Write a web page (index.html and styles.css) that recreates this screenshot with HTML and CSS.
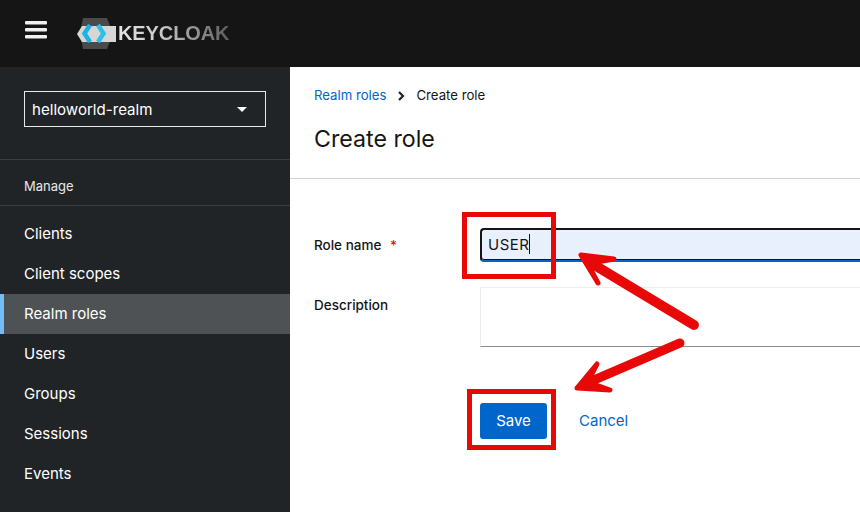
FILE: index.html
```html
<!DOCTYPE html>
<html lang="en">
<head>
    <meta charset="UTF-8">
    <meta name="viewport" content="width=device-width, initial-scale=1.0">
    <title>Create role</title>
    <link rel="stylesheet" href="styles.css">
</head>
<body>

    <!-- Top bar -->
    <header class="topbar">
        <svg class="burger" width="22" height="20" viewBox="0 0 22 20">
            <rect x="0" y="1" width="22" height="3.5" rx="1" fill="#f0f0f0"/>
            <rect x="0" y="8" width="22" height="3.5" rx="1" fill="#f0f0f0"/>
            <rect x="0" y="15" width="22" height="3.5" rx="1" fill="#f0f0f0"/>
        </svg>
        <div class="logo">
            <svg width="41" height="33" viewBox="0 0 41 33">
                <polygon points="6,1 30,1 36,16.5 30,32 6,32 3,16.5" fill="#4a4a4a"/>
                <polygon points="0,17 5,9 39,9 39,25 5,25" fill="#d6d6d6"/>
                <path d="M13 8 L7.5 16.5 L13 25" fill="none" stroke="#1ab4e4" stroke-width="4.5"/>
                <path d="M21 8 L26.5 16.5 L21 25" fill="none" stroke="#2cc0ea" stroke-width="4.5"/>
            </svg>
            <span class="logo-text">KEYCLOAK</span>
        </div>
    </header>

    <div class="layout">
        <!-- Sidebar -->
        <nav class="sidebar">
            <div class="realm-wrap">
                <div class="realm-select">
                    <span>helloworld-realm</span>
                    <span class="caret"></span>
                </div>
            </div>
            <div class="nav-title">Manage</div>
            <ul class="nav-list">
                <li>Clients</li>
                <li>Client scopes</li>
                <li class="current">Realm roles</li>
                <li>Users</li>
                <li>Groups</li>
                <li>Sessions</li>
                <li>Events</li>
            </ul>
        </nav>

        <!-- Main -->
        <main class="content">
            <section class="page-head">
                <div class="crumbs">
                    <a href="#">Realm roles</a>
                    <svg width="8" height="10" viewBox="0 0 8 10">
                        <path d="M2 1 L6 5 L2 9" fill="none" stroke="#222" stroke-width="2.2"/>
                    </svg>
                    <span>Create role</span>
                </div>
                <h1>Create role</h1>
            </section>

            <form class="role-form">
                <div class="form-row name-row">
                    <label>Role name <span class="req">*</span></label>
                    <div class="name-input">USER<span class="cursor"></span></div>
                </div>
                <div class="form-row desc-row">
                    <label>Description</label>
                    <div class="desc-input"></div>
                </div>
                <div class="actions">
                    <button type="button">Save</button>
                    <a href="#">Cancel</a>
                </div>
            </form>
        </main>
    </div>

    <!-- Red annotations over the screenshot -->
    <svg class="marks" width="860" height="512" viewBox="0 0 860 512">
        <rect x="464.5" y="214.5" width="89" height="62" fill="none" stroke="#e80808" stroke-width="5"/>
        <rect x="469.5" y="391.5" width="84" height="56" fill="none" stroke="#e80808" stroke-width="5"/>
        <g fill="#e80808" stroke="#e80808" stroke-linecap="round" stroke-linejoin="round">
            <path d="M694 325 L596 266" fill="none" stroke-width="10"/>
            <path d="M581 255 L614 259 L597 262 L590 268 L598 283 Z" stroke-width="5"/>
            <path d="M680 343 L594 380" fill="none" stroke-width="9"/>
            <path d="M577 388 L597 364 L590 378 L596 385 L610 390 Z" stroke-width="5"/>
        </g>
    </svg>

</body>
</html>
```

FILE: styles.css
```css
html, body {
    margin: 0;
    height: 100%;
}
body {
    position: relative;
    width: 860px;
    height: 512px;
    overflow: hidden;
    font-family: "Inter", "Liberation Sans", sans-serif;
    font-size: 15px;
    color: #151515;
    background-color: #fff;
}
.topbar {
    height: 67px;
    background-color: #151515;
    display: flex;
    align-items: center;
    padding-left: 25px;
    box-sizing: border-box;
}
.burger {
    margin-top: -7px;
}
.logo {
    display: flex;
    align-items: center;
    margin-left: 30px;
    margin-top: -1px;
}
.logo-text {
    font-family: "Liberation Sans", sans-serif;
    font-weight: 700;
    font-size: 20px;
    letter-spacing: -0.1px;
    background: linear-gradient(90deg, #e4e4e4 0%, #c8c8c8 40%, #949494 70%, #5c5c5c 100%);
    -webkit-background-clip: text;
    background-clip: text;
    color: transparent;
}
.layout {
    display: flex;
    height: 445px;
}
.sidebar {
    width: 290px;
    flex-shrink: 0;
    background-color: #212427;
    color: #fff;
}
.realm-wrap {
    padding: 24px 24px 32px;
    border-bottom: 1px solid #3c3f42;
}
.realm-select {
    height: 34px;
    border: 1px solid #e8e8e8;
    display: flex;
    align-items: center;
    justify-content: space-between;
    padding: 0 18px 0 7px;
    font-size: 15.1px;
}
.caret {
    width: 0;
    height: 0;
    border-left: 5px solid transparent;
    border-right: 5px solid transparent;
    border-top: 5px solid #fff;
}
.nav-title {
    padding: 18px 24px 11px;
    font-size: 13px;
    line-height: 16px;
    color: #e8e8e8;
    border-bottom: 1px solid #3c3f42;
}
.nav-list {
    list-style: none;
    margin: 8px 0 0;
    padding: 0;
}
.nav-list li {
    height: 40px;
    line-height: 40px;
    padding-left: 24px;
    font-size: 15px;
}
.nav-list .current {
    background-color: #4f5255;
    border-left: 4px solid #73bcf7;
    padding-left: 20px;
}
.content {
    flex: 1;
    min-width: 0;
}
.page-head {
    padding: 20px 24px 0;
    height: 91px;
    border-bottom: 1px solid #d2d2d2;
}
.crumbs {
    display: flex;
    align-items: center;
    gap: 11px;
    font-size: 13.2px;
    line-height: 17px;
}
.crumbs a, .actions a {
    color: #06c;
    text-decoration: none;
}
.page-head h1 {
    margin: 20px 0 0;
    font-size: 23.2px;
    line-height: 30px;
    font-weight: 400;
}
.role-form {
    padding: 49px 0 0 24px;
}
.form-row {
    display: flex;
}
.form-row label {
    width: 166px;
    flex-shrink: 0;
    font-size: 13.5px;
    font-weight: 500;
}
.req {
    color: #c9190b;
    margin-left: 5px;
}
.name-row label {
    line-height: 34px;
}
.name-input {
    flex: 1;
    height: 34px;
    box-sizing: border-box;
    background-color: #e8f0fe;
    border: 2px solid #151515;
    border-right: none;
    border-bottom-color: #06c;
    border-radius: 4px 0 0 4px;
    box-shadow: inset 0 -1px 0 #151515;
    padding: 0 0 2px 6px;
    font-size: 15px;
    letter-spacing: 0.5px;
    display: flex;
    align-items: center;
}
.cursor {
    width: 1px;
    height: 20px;
    background-color: #151515;
}
.desc-row {
    margin-top: 25px;
}
.desc-row label {
    line-height: 18px;
    padding-top: 9px;
}
.desc-input {
    flex: 1;
    height: 58px;
    border: 1px solid #ededed;
    border-right: none;
    border-bottom: 1px solid #8a8d90;
}
.actions {
    display: flex;
    align-items: center;
    gap: 32px;
    margin: 56px 0 0 166px;
}
.actions button {
    width: 67px;
    height: 36px;
    background-color: #06c;
    color: #fff;
    border: none;
    border-radius: 3px;
    font-family: inherit;
    font-size: 15px;
    padding: 0 0 2px;
}
.actions a {
    font-size: 15px;
    margin-top: -2px;
}
.marks {
    position: absolute;
    left: 0;
    top: 0;
    pointer-events: none;
}
```
